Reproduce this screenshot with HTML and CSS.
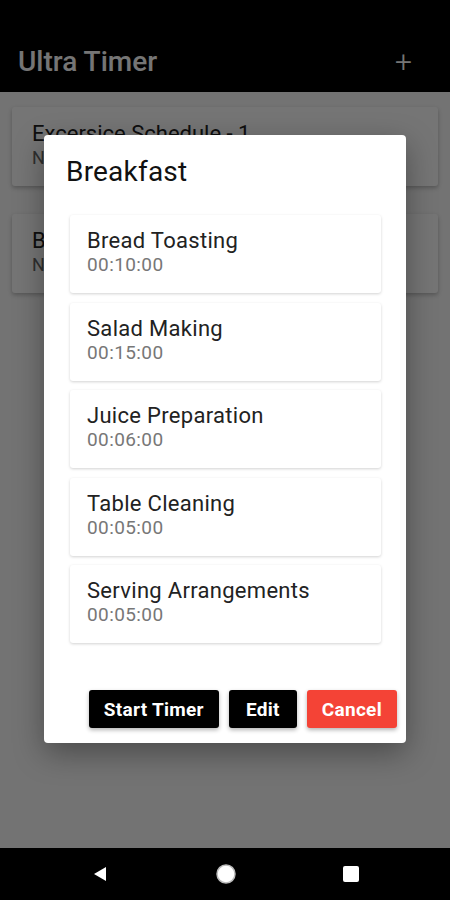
FILE: index.html
```html
<!DOCTYPE html>
<html lang="en">
<head>
  <meta charset="UTF-8">
  <meta name="viewport" content="width=device-width, initial-scale=1.0">
  <title>Ultra Timer</title>
  <link rel="stylesheet" href="styles.css">
</head>
<body>
  <div class="screen">
    <div class="app">
      <header class="topbar">
        <h1>Ultra Timer</h1>
        <span class="add">+</span>
      </header>

      <div class="list">
        <div class="card">
          <div class="name">Excersice Schedule - 1</div>
          <div class="sub">No. of Timers: 4</div>
        </div>
        <div class="card">
          <div class="name">Breakfast</div>
          <div class="sub">No. of Timers: 5</div>
        </div>
      </div>

      <!-- fundo escuro do dialogo -->
      <div class="scrim"></div>

      <div class="dialog">
        <h2>Breakfast</h2>
        <div class="items">
          <div class="item">
            <div class="item-name">Bread Toasting</div>
            <div class="item-time">00:10:00</div>
          </div>
          <div class="item">
            <div class="item-name">Salad Making</div>
            <div class="item-time">00:15:00</div>
          </div>
          <div class="item">
            <div class="item-name">Juice Preparation</div>
            <div class="item-time">00:06:00</div>
          </div>
          <div class="item">
            <div class="item-name">Table Cleaning</div>
            <div class="item-time">00:05:00</div>
          </div>
          <div class="item">
            <div class="item-name">Serving Arrangements</div>
            <div class="item-time">00:05:00</div>
          </div>
        </div>
        <div class="actions">
          <button class="btn">Start Timer</button>
          <button class="btn btn-edit">Edit</button>
          <button class="btn btn-red">Cancel</button>
        </div>
      </div>
    </div>

    <nav class="navbar">
      <svg width="18" height="18" viewBox="0 0 18 18"><path d="M15 2 L15 16 L3 9 Z" fill="#fff"/></svg>
      <svg width="22" height="22" viewBox="0 0 22 22"><circle cx="11" cy="11" r="9" fill="#fff" stroke="#bbb" stroke-width="1.5"/></svg>
      <svg width="18" height="18" viewBox="0 0 18 18"><rect x="1" y="1" width="16" height="16" rx="2" fill="#fff"/></svg>
    </nav>
  </div>
</body>
</html>
```

FILE: styles.css
```css
body {
  margin: 0;
  font-family: Roboto, 'Noto Sans', sans-serif;
  background: #000;
}
.screen {
  width: 450px;
  height: 900px;
  display: flex;
  flex-direction: column;
}
.app {
  position: relative;
  height: 848px;
  background: #fafafa;
  display: flex;
  flex-direction: column;
}
.topbar {
  height: 92px;
  background: #000;
  display: flex;
  align-items: flex-end;
  justify-content: space-between;
  padding: 0 38px 13px 18px;
  box-sizing: border-box;
}
.topbar h1 {
  margin: 0;
  color: #fff;
  font-size: 28px;
  font-weight: 500;
  line-height: 34px;
}
.add {
  color: #fff;
  font-size: 30px;
  font-weight: 300;
  line-height: 30px;
  padding-bottom: 2px;
}
.list {
  padding: 15px 12px;
  display: flex;
  flex-direction: column;
  gap: 28px;
}
.card {
  background: #fff;
  height: 79px;
  border-radius: 3px;
  box-shadow: 0 2px 4px rgba(0, 0, 0, 0.25);
  padding: 14px 20px;
  box-sizing: border-box;
}
.card .name {
  font-size: 22px;
  color: #222;
}
.card .sub {
  font-size: 18px;
  color: #666;
  margin-top: 1px;
}
.scrim {
  position: absolute;
  inset: 0;
  background: rgba(0, 0, 0, 0.54);
}
.dialog {
  position: absolute;
  left: 44px;
  top: 135px;
  width: 362px;
  height: 608px;
  background: #fff;
  border-radius: 4px;
  box-shadow: 0 10px 30px rgba(0, 0, 0, 0.35);
  box-sizing: border-box;
  padding: 20px 9px 15px 0;
  display: flex;
  flex-direction: column;
}
.dialog h2 {
  margin: 0 0 0 22px;
  font-size: 28px;
  font-weight: 400;
  letter-spacing: 0.2px;
  color: #111;
  line-height: 34px;
}
.items {
  margin: 26px 0 0 26px;
  width: 311px;
  display: flex;
  flex-direction: column;
  gap: 9.5px;
}
.item {
  height: 78px;
  border-radius: 3px;
  box-shadow: 0 1px 3px rgba(0, 0, 0, 0.18);
  padding: 13px 17px;
  box-sizing: border-box;
}
.item-name {
  font-size: 22px;
  letter-spacing: 0.3px;
  color: #222;
  line-height: 26px;
}
.item-time {
  font-size: 19px;
  letter-spacing: 0.4px;
  color: #777;
  line-height: 22px;
}
.actions {
  margin-top: auto;
  display: flex;
  justify-content: flex-end;
  gap: 10px;
}
.btn {
  height: 38px;
  border: none;
  border-radius: 3px;
  background: #000;
  color: #fff;
  font-family: Roboto, sans-serif;
  font-size: 19px;
  font-weight: 700;
  letter-spacing: 0.3px;
  padding: 0 15px;
  box-shadow: 0 2px 4px rgba(0, 0, 0, 0.3);
  cursor: pointer;
}
.btn-edit {
  padding: 0 17px;
}
.btn-red {
  background: #f44336;
}
.navbar {
  height: 52px;
  background: #000;
  display: flex;
  align-items: center;
  justify-content: space-between;
  padding: 0 90px 0 91px;
}
```
